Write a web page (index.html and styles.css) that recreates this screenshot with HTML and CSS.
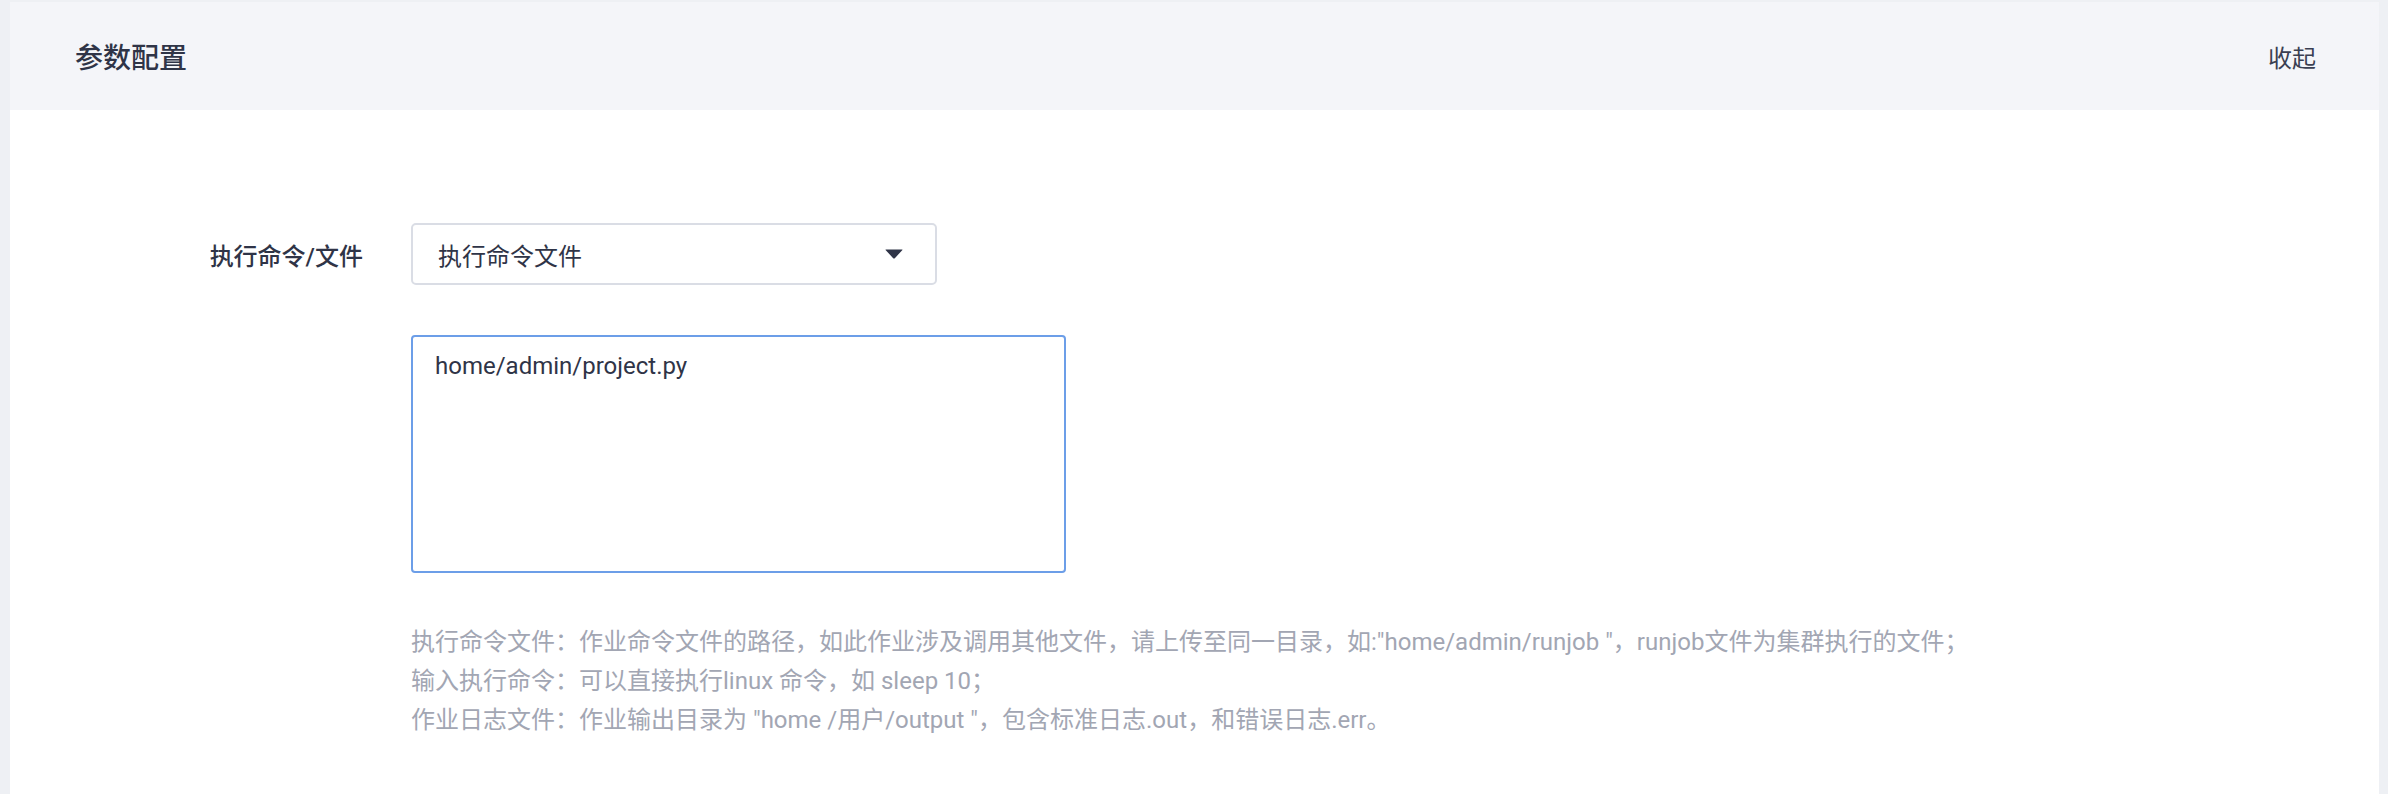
FILE: index.html
```html
<!DOCTYPE html>
<html>
    <head>
        <meta charset="utf-8">
        <title>参数配置</title>
        <link rel="stylesheet" href="styles.css">
    </head>
    <body>
        <div class="panel">
            <div class="panel-head">
                <h2>参数配置</h2>
                <a class="fold_link">收起</a>
            </div>
            <div class="panel-body">
                <div class="form_row">
                    <label class="form_label">执行命令/文件</label>
                    <div class="select_box">
                        <span>执行命令文件</span>
                        <svg class="select_arrow" width="18" height="10" viewBox="0 0 18 10">
                            <path d="M1 0.5 L17 0.5 Q18 0.5 17.2 1.3 L9.8 9.2 Q9 10 8.2 9.2 L0.8 1.3 Q0 0.5 1 0.5 Z" fill="#2f3447"/>
                        </svg>
                    </div>
                </div>
                <div class="form_row">
                    <span class="form_label"></span>
                    <textarea class="cmd_text">home/admin/project.py</textarea>
                </div>
                <div class="form_row">
                    <span class="form_label"></span>
                    <div class="help_text">
                        执行命令文件：作业命令文件的路径，如此作业涉及调用其他文件，请上传至同一目录，如:"home/admin/runjob "，runjob文件为集群执行的文件；<br/>
                        输入执行命令：可以直接执行linux 命令，如 sleep 10；<br/>
                        作业日志文件：作业输出目录为 "home /用户/output "，包含标准日志.out，和错误日志.err。
                    </div>
                </div>
            </div>
        </div>
    </body>
</html>
```

FILE: styles.css
```css
body {
    margin: 2px 9px 0 10px;
    background: #eef0f4;
    font-family: Roboto, "Noto Sans CJK SC", sans-serif;
    color: #2f3447;
}
.panel {
    background: #ffffff;
    min-height: 820px;
}
.panel-head {
    display: flex;
    align-items: center;
    justify-content: space-between;
    height: 108px;
    padding: 0 63px 0 65px;
    background: #f4f5f9;
}
.panel-head h2 {
    margin: 0;
    font-size: 28px;
    font-weight: 500;
    color: #2f3447;
}
.fold_link {
    font-size: 24px;
    color: #3a3f52;
    cursor: pointer;
}
.panel-body {
    padding-top: 113px;
}
.form_row {
    display: flex;
    align-items: flex-start;
    margin-bottom: 50px;
}
.form_row:first-child {
    align-items: center;
}
.form_label {
    width: 353px;
    margin-right: 48px;
    flex-shrink: 0;
    text-align: right;
    font-size: 24px;
    font-weight: 500;
    color: #2f3447;
}
.select_box {
    display: flex;
    align-items: center;
    justify-content: space-between;
    box-sizing: border-box;
    width: 526px;
    height: 62px;
    padding: 0 32px 0 25px;
    border: 2px solid #dadde5;
    border-radius: 5px;
    font-size: 24px;
    color: #2f3447;
}
.cmd_text {
    box-sizing: border-box;
    width: 655px;
    height: 238px;
    margin: 0;
    padding: 11px 22px;
    border: 2px solid #6c9ee8;
    border-radius: 4px;
    resize: none;
    outline: none;
    font-family: Roboto, "Noto Sans CJK SC", sans-serif;
    font-size: 24px;
    line-height: 36px;
    color: #2f3447;
}
.help_text {
    font-size: 24px;
    line-height: 39px;
    color: #a2a6b3;
    white-space: nowrap;
}
```
